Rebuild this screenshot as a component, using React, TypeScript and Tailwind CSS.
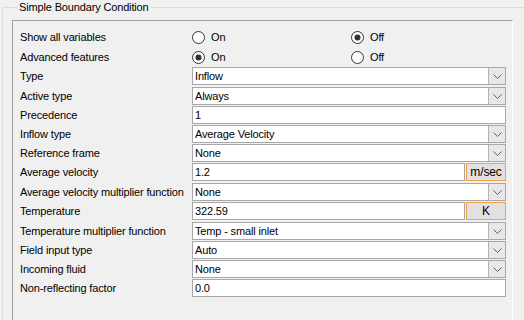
import React from 'react';

type Row = {
  label: string;
  kind: 'combo' | 'text' | 'unit';
  value: string;
  unit?: string;
  h: string;
};

const rows: Row[] = [
  { label: 'Type', kind: 'combo', value: 'Inflow', h: 'h-[20px]' },
  { label: 'Active type', kind: 'combo', value: 'Always', h: 'h-[19px]' },
  { label: 'Precedence', kind: 'text', value: '1', h: 'h-[19px]' },
  { label: 'Inflow type', kind: 'combo', value: 'Average Velocity', h: 'h-[19px]' },
  { label: 'Reference frame', kind: 'combo', value: 'None', h: 'h-[19px]' },
  { label: 'Average velocity', kind: 'unit', value: '1.2', unit: 'm/sec', h: 'h-[20px]' },
  { label: 'Average velocity multiplier function', kind: 'combo', value: 'None', h: 'h-[19px]' },
  { label: 'Temperature', kind: 'unit', value: '322.59', unit: 'K', h: 'h-[20px]' },
  { label: 'Temperature multiplier function', kind: 'combo', value: 'Temp - small inlet', h: 'h-[19px]' },
  { label: 'Field input type', kind: 'combo', value: 'Auto', h: 'h-[19px]' },
  { label: 'Incoming fluid', kind: 'combo', value: 'None', h: 'h-[19px]' },
  { label: 'Non-reflecting factor', kind: 'text', value: '0.0', h: 'h-[19px]' },
];

const Radio = ({ checked, label }: { checked?: boolean; label: string }) => (
  <div className="flex items-center gap-[6px]">
    <svg width="13" height="13" viewBox="0 0 13 13">
      <circle cx="6.5" cy="6.5" r="6" fill="#fff" stroke="#333" strokeWidth="1" />
      {checked && <circle cx="6.5" cy="6.5" r="3" fill="#333" />}
    </svg>
    <span>{label}</span>
  </div>
);

const Chevron = () => (
  <svg width="9" height="5" viewBox="0 0 9 5">
    <path d="M0.5 0.5 L4.5 4.5 L8.5 0.5" fill="none" stroke="#606060" strokeWidth="1" />
  </svg>
);

const Control = ({ row }: { row: Row }) => {
  if (row.kind === 'combo') {
    return (
      <div className="flex h-[18px] flex-1 border border-[#a8a8a8] bg-white">
        <div className="flex flex-1 items-center pl-[2px] leading-none">{row.value}</div>
        <div className="flex w-[17px] items-center justify-center border-l border-[#b4b4b4] bg-[#e8e8e8]">
          <Chevron />
        </div>
      </div>
    );
  }
  if (row.kind === 'unit') {
    return (
      <div className="flex h-[18px] flex-1 gap-[1px]">
        <div className="flex flex-1 items-center border border-[#a8a8a8] bg-white pl-[2px] leading-none">
          {row.value}
        </div>
        <div className="flex w-[40px] items-center justify-center border border-[#f4a24a] bg-[#e1e1e1] text-[12px] leading-none">
          {row.unit}
        </div>
      </div>
    );
  }
  return (
    <div className="flex h-[18px] flex-1 items-center border border-[#a8a8a8] bg-white pl-[2px] leading-none">
      {row.value}
    </div>
  );
};

export default function App() {
  return (
    <div
      className="h-[320px] w-[524px] overflow-hidden bg-[#f0f0f0] text-[11px] tracking-[-0.15px] text-black"
      style={{ fontFamily: '"Liberation Sans", Arial, sans-serif' }}
    >
      <fieldset className="ml-[2px] w-[560px] border border-[#dcdcdc] pl-[9px]">
        <legend className="ml-[5px] px-[2px] leading-[14px]">Simple Boundary Condition</legend>
        <div className="mt-[6px] h-[320px] w-[501px] border-l border-t border-r border-l-[#a0a0a0] border-t-[#a0a0a0] border-r-white pl-[7px] pr-[6px] pt-[6px]">
          <div className="flex h-[20px] items-center">
            <div className="w-[172px]">Show all variables</div>
            <div className="w-[159px]"><Radio label="On" /></div>
            <Radio checked label="Off" />
          </div>
          <div className="flex h-[20px] items-center">
            <div className="w-[172px]">Advanced features</div>
            <div className="w-[159px]"><Radio checked label="On" /></div>
            <Radio label="Off" />
          </div>
          {rows.map((r) => (
            <div key={r.label} className={`flex items-start ${r.h}`}>
              <div className="flex h-[18px] w-[172px] items-center whitespace-nowrap">{r.label}</div>
              <Control row={r} />
            </div>
          ))}
        </div>
      </fieldset>
    </div>
  );
}
